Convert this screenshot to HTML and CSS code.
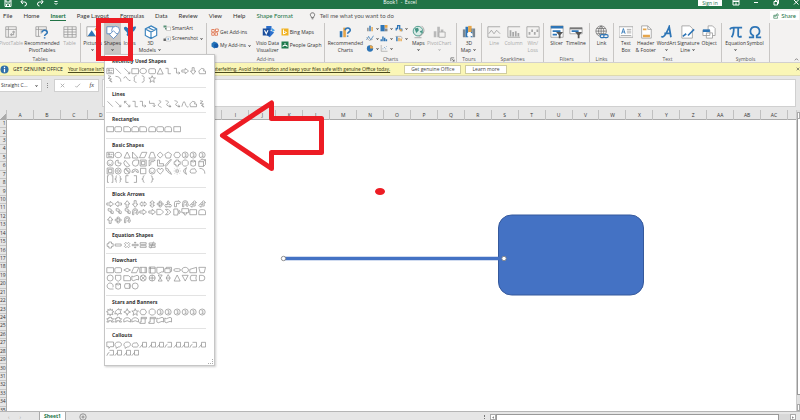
FILE: index.html
```html
<!DOCTYPE html>
<html lang="en">
<head>
<meta charset="utf-8">
<title>Book1 - Excel</title>
<link rel="stylesheet" href="styles.css">
</head>
<body>
<div class="app">
  <header class="titlebar">
    <div class="quick">
      <button aria-label="Save"><svg viewBox="0 0 8 8"><path d="M1 0v6.500h6V0M2.500 6.500v-2.500h3v2.500M2 0v2h4V0"/></svg></button>
      <button aria-label="Undo"><svg viewBox="0 0 8 8"><path d="M2.500 0L.8 2L3 4M1 2h3.500a2 2 0 0 1 0 4"/></svg></button>
      <button aria-label="Redo"><svg viewBox="0 0 8 8"><path d="M5.500 0L7.200 2L5 4M7 2H3.500a2 2 0 0 0 0 4"/></svg></button>
      <button aria-label="Customize"><svg viewBox="0 0 8 8"><path d="M2.500 1.500h3M2.500 3l1.500 1.500L5.500 3"/></svg></button>
    </div>
    <h1>Book1 &nbsp;-&nbsp; Excel</h1>
    <div class="window-tools">
      <button class="signin">Sign in</button>
      <button aria-label="Ribbon options"><svg viewBox="0 0 8 8"><path d="M1 0h6v5H1zM1 1.500h6M4 2.500V5"/></svg></button>
      <button aria-label="Minimize"><svg viewBox="0 0 8 8"><path d="M2 2.500h4"/></svg></button>
      <button aria-label="Restore"><svg viewBox="0 0 8 8"><path d="M2 1.500h3.500V5H2zM3.500 1.500V0h3v3.500h-1"/></svg></button>
      <button aria-label="Close"><svg viewBox="0 0 8 8"><path d="M2 0l4.500 4.500M6.500 0L2 4.500"/></svg></button>
    </div>
  </header>

  <nav class="tabs">
    <a href="#">File</a><a href="#">Home</a><a href="#" class="active">Insert</a><a href="#">Page Layout</a><a href="#">Formulas</a><a href="#">Data</a><a href="#">Review</a><a href="#">View</a><a href="#">Help</a><a href="#" class="context">Shape Format</a>
    <button class="tell"><svg viewBox="0 0 8 10"><path d="M2.600 7V6C.5 4.200 1 1 4 1s3.500 3.200 1.400 5v1zM3 8.500h2"/></svg>Tell me what you want to do</button>
    <button class="share"><svg viewBox="0 0 8 8"><path d="M3 3H1v4h5V5.500M2.500 5c0-2 1-3 3-3V.8L7.500 2.700L5.500 4.500V3.300C4 3.300 3 4 2.500 5z"/></svg>Share</button>
  </nav>

  <div class="ribbon">
    <section class="group">
      <div class="tools g-tables">
        <button class="tool off"><svg viewBox="0 0 16 16"><path class="k" d="M2 2h12v12H2zM2 5h12M5 2v12"/><path class="k2" d="M8 11h3V7M9.500 8.500L11 7l1.500 1.500M9 9.500L7.500 11L9 12.500"/></svg>PivotTable</button>
        <button class="tool"><svg viewBox="0 0 16 16"><path class="k" d="M1 2h12v4M1 2v11h5M1 5h12M4 2v11M7 5v5"/><path class="b2" d="M8 8.500c0-3.500 6-3 6 0c0 2-3 1.800-3 4M11 14v1.500"/></svg>Recommended<br>PivotTables</button>
        <button class="tool off"><svg viewBox="0 0 16 16"><path class="k" d="M1 2h14v12H1zM1 5h14M1 8h14M1 11h14M5.500 2v12M10.500 2v12"/></svg>Table</button>
      </div>
      <h2>Tables</h2>
    </section>
    <section class="group">
      <div class="tools g-illus">
        <button class="tool"><svg viewBox="0 0 16 16"><path class="k" fill="#fff" d="M1 2h14v11H1z"/><path class="b" d="M2 12.500L6.500 6l4.500 6.500z"/><circle class="o" cx="11.500" cy="5" r="1.500"/></svg>Pictures<i></i></button>
        <div class="shapes-menu">
          <button class="tool pressed" aria-expanded="true"><svg viewBox="0 0 16 16"><g fill="#fff" stroke="#4a7ebb" stroke-width=".9"><path d="M1 2h8v8H1z"/><circle cx="11" cy="6" r="4.500"/><path d="M8.500 6.500L13 11l-4.500 4.500L4 11z"/></g></svg>Shapes<i></i></button>
          <div class="gallery" id="gallery"></div>
        </div>
        <button class="tool"><svg viewBox="0 0 16 16"><path class="b" d="M1 3c3-3 4 2 7 1s4-3 7-2c-1 5-4 5-5 8s-4 4-6 1c3-3-3-4-3-8z"/></svg>Icons<i></i></button>
        <button class="tool"><svg viewBox="0 0 16 16"><path fill="#fff" stroke="#3b83bd" stroke-width="1.300" d="M8 1l6.500 3.500v7.500L8 15.500L1.500 12V4.500zM1.500 4.500L8 8l6.500-3.500M8 8v7.500M5 2.800l6.500 3.400"/></svg><span>3D<br>Models <i></i></span></button>
        <div class="stack">
          <button><svg viewBox="0 0 16 16"><path fill="#5b9279" d="M1 3h6v4H1zM4 8h5v3H4z"/><path class="k" fill="#fff" d="M7 6h8v7H7z"/></svg>SmartArt</button>
          <button><svg viewBox="0 0 16 16"><path fill="#666" d="M1 9h5v5H1z"/><path class="k" fill="#fff" d="M6 6h9v8H6z"/><path class="bl" d="M10.500 8v4M8.500 10h4"/></svg>Screenshot <i></i></button>
        </div>
      </div>
    </section>
    <section class="group">
      <div class="tools g-addins">
        <div class="stack">
          <button><svg viewBox="0 0 16 16"><path fill="#fff" stroke="#dc6b43" stroke-width="1.600" d="M1.500 3h5v5h-5zM1.500 9.500h5v5h-5zM8 9.500h5v5H8zM9 2h5.500v5H9z"/></svg>Get Add-ins</button>
          <button><svg viewBox="0 0 16 16"><path fill="#2474b9" d="M6 1l7 3v6l-6 5l-6-4V5z"/><circle cx="10.500" cy="9.500" r="4.500" fill="#1258a8"/></svg>My Add-ins <i></i></button>
        </div>
        <button class="tool"><svg viewBox="0 0 16 16"><path fill="#2b6fcb" d="M6 1h6v5H6zM10 6l5 2.500l-5 5.500l-4-3z"/><path fill="#1b4f9c" d="M2 4h8v8H2z"/><path fill="#48a1e8" d="M12 3l4 3l-3 2z"/><path stroke="#fff" fill="none" stroke-width="1.300" d="M4 6l2 4l2-4"/></svg>Visio Data<br>Visualizer</button>
        <div class="stack">
          <button><svg viewBox="0 0 16 16"><path fill="#f0b323" d="M1 1h14v14H1z"/><path fill="none" stroke="#fff" stroke-width="2" d="M5 3v9l6-3l-4-2"/></svg>Bing Maps</button>
          <button><svg viewBox="0 0 16 16"><path fill="#1f7a4d" d="M1 1h14v14H1z"/><path stroke="#fff" stroke-width="1.800" fill="none" d="M8 4v4M4 12V9h8v3"/></svg>People Graph</button>
        </div>
      </div>
      <h2>Add-ins</h2>
    </section>
    <section class="group">
      <div class="tools g-charts">
        <button class="tool"><svg viewBox="0 0 16 16"><path class="b" d="M2 7h3v7H2z"/><path class="o" d="M6 3h3v11H6z"/><path class="b2" d="M8 6c1-4 6-3 6 0c0 2-3 2-3 4M11 12v1.500"/></svg>Recommended<br>Charts</button>
        <div class="chart-grid">
          <button aria-label="Column chart"><svg viewBox="0 0 10 10"><path class="g" d="M1 4h2v5H1z"/><path class="b" d="M4 1h2v8H4z"/><path class="o" d="M7 3h2v6H7z"/></svg><i></i></button>
          <button aria-label="Hierarchy chart"><svg viewBox="0 0 10 10"><path class="b" d="M0 0h6v9H0z"/><path class="o" d="M6 0h4v4H6z"/><path class="g" d="M6 5h4v4H6z"/></svg><i></i></button>
          <button aria-label="Waterfall chart"><svg viewBox="0 0 10 10"><path class="b2" stroke-width="1" d="M1 8V5h2V1h3v5h3v3"/><path class="o" d="M6 6h3v3H6z"/></svg><i></i></button>
          <button aria-label="Line chart"><svg viewBox="0 0 10 10"><path class="bl" d="M0 7l3-5l3 5l4-6"/><path class="k" d="M0 3l4 5l5-2"/></svg><i></i></button>
          <button aria-label="Statistic chart"><svg viewBox="0 0 10 10"><path class="b" d="M0 6h2v3H0zM2.500 2h2v7h-2zM5 4h2v5H5zM7.500 6h2v3h-2z"/></svg><i></i></button>
          <button aria-label="Combo chart"><svg viewBox="0 0 10 10"><path class="o" d="M4 4h2v5H4zM7 5h2v4H7z"/><path class="b" d="M1 2h2v7H1z"/><path class="k" d="M0 2h8l2 3"/></svg><i></i></button>
          <button aria-label="Pie chart"><svg viewBox="0 0 10 10"><circle class="b" cx="5" cy="5" r="4.500"/><path class="o" d="M5 5V.5A4.500 4.500 0 0 1 9.500 5z"/></svg><i></i></button>
          <button aria-label="Scatter chart"><svg viewBox="0 0 10 10"><path class="k" d="M1 0v9h9"/><path class="b" d="M3 5h1v1H3zM5 3h1v1H5zM7 5h1v1H7zM8 2h1v1H8z"/></svg><i></i></button>
        </div>
        <button class="tool"><svg viewBox="0 0 16 16"><circle cx="8" cy="7" r="5.500" fill="#d9ebe6" stroke="#459585"/><path fill="#459585" d="M4 4l4-1l1 3l-3 3zM10 7l3-1l-1 4z"/><path class="k" d="M4 14.500h8M12 1c5 4 3 10-3 12"/></svg>Maps<i></i></button>
        <button class="tool off"><svg viewBox="0 0 16 16"><path fill="#b9b9b9" d="M2 7h3v7H2zM6 2h3v12H6zM10 5h3v9h-3z"/><path fill="#f3f2f1" stroke="#aaa" d="M8 8h7v6H8z"/></svg>PivotChart<i></i></button>
      </div>
      <h2>Charts</h2><button class="launcher" aria-label="Chart options"><svg viewBox="0 0 6 6"><path d="M1 5V1h4M2.500 2.500L5 5M5 3v2H3"/></svg></button>
    </section>
    <section class="group">
      <div class="tools">
        <button class="tool"><svg viewBox="0 0 16 16"><path fill="#7b8791" d="M1 5h3v9H1z"/><path class="b" d="M4 2h3v12H4zM10 4h2v10h-2z"/><path class="o" d="M7 1h4v7H7z"/><path fill="#7b8791" d="M12 4h3v10h-3z"/><path fill="#fff" d="M6 9l3-1l3 2v3l-3-1l-3 1z"/></svg><span>3D<br>Map <i></i></span></button>
      </div>
      <h2>Tours</h2>
    </section>
    <section class="group">
      <div class="tools g-spark">
        <button class="tool off"><svg viewBox="0 0 16 16"><path class="k" d="M1 2h14M1 14h14M1 2v12M2 10l3-4l3 4l3-4l4 4"/></svg>Line</button>
        <button class="tool off"><svg viewBox="0 0 16 16"><path class="k" d="M1 2h14M1 14h14M1 2v12"/><path fill="#a8a8a8" d="M3 6h2v7H3zM6 8h2v5H6zM9 7h2v6H9zM12 9h2v4h-2z"/></svg>Column</button>
        <button class="tool off"><svg viewBox="0 0 16 16"><path class="k" d="M1 2h14v12H1z"/><path fill="#a8a8a8" d="M3 8h2v3H3zM6 5h2v3H6zM9 8h2v3H9zM12 5h2v3h-2z"/></svg>Win/<br>Loss</button>
      </div>
      <h2>Sparklines</h2>
    </section>
    <section class="group">
      <div class="tools g-filters">
        <button class="tool"><svg viewBox="0 0 16 16"><path class="k" fill="#fff" d="M1 1h14v13H1z"/><path class="b" d="M1 1h14v3H1zM3 6h9v2H3zM3 10h5v2H3z"/><path fill="#555" d="M7 8h8l-3 3.500V15h-2v-3.500z"/></svg>Slicer</button>
        <button class="tool"><svg viewBox="0 0 16 16"><path class="k" fill="#fff" d="M1 3h14v7H1z"/><path fill="#777" d="M1 3h14v2H1z"/><path class="b" d="M3 6h8v2H3z"/><path fill="#555" d="M7 8h8l-3 3.500V15h-2v-3.500z"/></svg>Timeline</button>
      </div>
      <h2>Filters</h2>
    </section>
    <section class="group">
      <div class="tools">
        <button class="tool"><svg viewBox="0 0 16 16"><g fill="none" stroke="#666" stroke-width=".8"><circle cx="7" cy="7" r="6"/><path d="M1 7h12M7 1v12M2 4h10M2 10h10M7 1c-4 4-4 8 0 12M7 1c4 4 4 8 0 12"/></g><g fill="#f3f2f1" stroke="#2e75b6" stroke-width="1.300"><rect x="6" y="11" width="5" height="3.500" rx="1.700"/><rect x="10" y="11" width="5" height="3.500" rx="1.700"/></g></svg>Link</button>
      </div>
      <h2>Links</h2>
    </section>
    <section class="group">
      <div class="tools g-text">
        <button class="tool"><svg viewBox="0 0 16 16"><path class="k" fill="#fff" d="M0 2h16v12H0z"/><path class="bl" d="M3 10l2-6l2 6M3.500 8h3"/><path class="k" d="M9 5h5M9 7h5M9 9h5M2 12h12"/></svg>Text<br>Box</button>
        <button class="tool"><svg viewBox="0 0 16 16"><path class="k" fill="#fff" d="M3 1h7l4 4v10H3z"/><path class="k" d="M10 1v4h4"/><path class="o" d="M4.500 4h4v2h-4zM4.500 11h8v3h-8z"/></svg>Header<br>&amp; Footer</button>
        <button class="tool"><svg viewBox="0 0 16 16"><path fill="none" stroke="#2e75b6" stroke-width="2" d="M1.500 13c2 2 5-1 9-11l2 12M5 9.500h7"/></svg>WordArt<i></i></button>
        <button class="tool"><svg viewBox="0 0 16 16"><path class="k" fill="#fff" d="M1 1h9l3 3v11H1z"/><path class="b2" d="M15 5l-7 7M2 13l4-3"/></svg><span>Signature<br>Line <i></i></span></button>
        <button class="tool"><svg viewBox="0 0 16 16"><path class="k" fill="#fff" d="M7 1h5l3 3v8H7z"/><path class="k" fill="#fff" d="M1 6h8v6H1zM5 9h7v6H5z"/><path class="b" d="M1 5h8v3H1z"/></svg>Object</button>
      </div>
      <h2>Text</h2>
    </section>
    <section class="group">
      <div class="tools g-symbols">
        <button class="tool"><svg viewBox="0 0 16 16"><path fill="none" stroke="#2e75b6" stroke-width="2" d="M1 5c1-2 2-2 4-2h10M5.500 3c0 5-.5 8-2.500 11M10.500 3v9c0 2 2 2 4 1"/></svg>Equation<i></i></button>
        <button class="tool"><svg viewBox="0 0 16 16"><path fill="none" stroke="#2e75b6" stroke-width="2" d="M1 14h5v-2C1 10 2 2 8 2s7 8 2 10v2h5"/></svg>Symbol</button>
      </div>
      <h2>Symbols</h2>
    </section>
    <div class="group last"><button class="launcher" aria-label="Collapse ribbon"><svg viewBox="0 0 6 6"><path d="M1 4l2-2l2 2"/></svg></button></div>
  </div>

  <div class="notice">
    <svg class="info" viewBox="0 0 10 10"><circle cx="5" cy="5" r="4.500" fill="#2f6fa8"/><path stroke="#fff" stroke-width="1.400" d="M5 4.200V8M5 2v1.300"/></svg>
    <strong>GET GENUINE OFFICE</strong>
    <a href="#">Your license isn't genuine, and you may be a victim of software counterfeiting. Avoid interruption and keep your files safe with genuine Office today.</a>
    <button>Get genuine Office</button>
    <button>Learn more</button>
    <button class="dismiss" aria-label="Dismiss"><svg viewBox="0 0 6 6"><path d="M1 1l4 4M5 1L1 5"/></svg></button>
  </div>

  <div class="formula-row">
    <button class="namebox">Straight C... <i></i></button>
    <span class="grip"></span>
    <div class="fx-tools">
      <button aria-label="Cancel"><svg viewBox="0 0 8 8"><path d="M2 2l4 4M6 2L2 6"/></svg></button>
      <button aria-label="Enter"><svg viewBox="0 0 8 8"><path d="M1.500 4.500L3 6l4-4"/></svg></button>
      <button class="fx">fx</button>
    </div>
    <textarea class="formula" aria-label="Formula bar"></textarea>
  </div>

  <main class="sheet">
    <div class="columns" id="columns"><span class="corner"></span></div>
    <div class="rows" id="rows"></div>
    <div class="canvas"></div>
    <div class="vscroll"><button aria-label="Scroll up"></button><span class="thumb"></span><button aria-label="Scroll down"></button></div>
  </main>

  <footer class="bottom">
    <div class="sheet-nav"><button aria-label="Previous sheet">‹</button><button aria-label="Next sheet">›</button></div>
    <button class="sheet-tab">Sheet1</button>
    <button class="add" aria-label="New sheet"><svg viewBox="0 0 10 10"><circle cx="5" cy="5" r="4"/><path d="M5 3v4M3 5h4"/></svg></button>
    <div class="hscroll"><span class="dots"></span><button aria-label="Scroll left"><svg viewBox="0 0 6 6"><path d="M4 1L2 3l2 2z"/></svg></button><span class="thumb"></span><span class="track"></span><button aria-label="Scroll right"><svg viewBox="0 0 6 6"><path d="M2 1l2 2l-2 2z"/></svg></button></div>
  </footer>

  <svg class="drawing" viewBox="0 0 800 420">
    <rect x="498.500" y="215" width="145" height="80" rx="13" fill="#4472c4" stroke="#35599c"/>
    <path d="M284 258.500H504" stroke="#4472c4" stroke-width="3.500"/>
    <g fill="#fff" stroke="#777" stroke-width=".8"><circle cx="283.500" cy="258.500" r="2.200"/><circle cx="504" cy="258.500" r="2.200"/></g>
    <g fill="none" stroke="#ed1c24" stroke-width="5">
      <path stroke-linejoin="round" d="M271.500 103v15.500h50V152.500h-50V168.500L222.500 135.500z"/>
      <path d="M98.500 20.500h32v38h-32z"/>
    </g>
    <ellipse cx="380" cy="191.500" rx="5" ry="3.500" fill="#ed1c24"/>
  </svg>
</div>
<script src="app.js"></script>
</body>
</html>
```
FILE: styles.css
```css
* { box-sizing: border-box; }
body { margin: 0; font: 5px/7px "Open Sans", "Noto Sans", sans-serif; color: #333; background: #fff; }
button { font: inherit; color: inherit; background: none; border: 0; padding: 0; margin: 0; white-space: nowrap; }
a { color: inherit; text-decoration: none; }
h1, h2 { margin: 0; font: inherit; }
svg { fill: none; flex: none; }
.app { position: relative; height: 100vh; display: flex; flex-direction: column; overflow: hidden; }

.titlebar { height: 9px; flex: none; background: #217346; color: #fff; display: grid; grid-template-columns: 1fr auto 1fr; align-items: start; }
.titlebar h1 { line-height: 5px; }
.titlebar svg { width: 8px; height: 8px; stroke: #fff; stroke-width: 1; display: block; }
.quick { display: flex; gap: 8px; padding-left: 4px; }
.window-tools { display: flex; justify-content: flex-end; align-items: start; gap: 12px; }
.signin { background: #fff; color: #217346; height: 6px; line-height: 5px; width: 24px; margin-right: -2px; }

.tabs { height: 13px; flex: none; display: flex; align-items: center; gap: 11px; padding: 0 1px 0 3px; background: #f3f2f1; font-family: Lato, "Open Sans", sans-serif; font-size: 6px; white-space: nowrap; }
.tabs a { height: 11px; line-height: 11px; border-bottom: 1px solid transparent; }
.tabs .active { color: #217346; font-weight: bold; border-color: #217346; }
.tabs .context { color: #217346; }
.tell { display: flex; align-items: center; gap: 4px; margin-left: 5px; color: #555; }
.tell svg { width: 7px; height: 8px; stroke: #555; }
.share { margin-left: auto; background: #fff; color: #217346; height: 9px; padding: 0 3px; display: flex; align-items: center; gap: 2px; }
.share svg { width: 6px; height: 6px; stroke: #217346; stroke-width: .8; }

.ribbon { height: 41px; flex: none; display: grid; grid-template-columns: 81fr 126fr 118fr 132fr 25fr 62fr 46fr 24fr 108fr 48fr 30fr; background: #f3f2f1; border-bottom: 1px solid #d2d0ce; }
.group { position: relative; min-width: 0; margin-top: 1px; border-right: 1px solid #c8c6c4; display: flex; flex-direction: column; justify-content: space-between; }
.group.last { border: 0; }
.group h2 { text-align: center; line-height: 6px; color: #555; }
.tools { display: grid; justify-content: stretch; }
.g-tables { grid-template-columns: 22fr 40fr 15fr 3fr; }
.g-illus { grid-template-columns: 23fr 17fr 17fr 25fr 43fr; }
.g-addins { grid-template-columns: 4fr 43fr 26fr 43fr; }
.g-addins > :first-child { grid-column: 2; }
.g-charts { grid-template-columns: 2fr 37fr 46fr 18fr 24fr 5fr; }
.g-charts > :first-child { grid-column: 2; }
.g-spark { grid-template-columns: 2fr 20fr 18fr 20fr; }
.g-spark > :first-child { grid-column: 2; }
.g-filters { grid-template-columns: 3fr 19fr 20fr 3fr; }
.g-filters > :first-child { grid-column: 2; }
.g-text { grid-template-columns: 2fr 20fr 20fr 22fr 22fr 20fr 2fr; }
.g-text > :first-child { grid-column: 2; }
.g-symbols { grid-template-columns: 4fr 20fr 20fr 4fr; }
.g-symbols > :first-child { grid-column: 2; }
.tool { min-width: 0; height: 31px; display: flex; flex-direction: column; align-items: center; text-align: center; line-height: 7px; }
.tool svg { display: block; width: 14px; height: 14px; margin: 2px 0 1px; }
.off { color: #aaa; }
.pressed { width: 100%; background: #c8c6c4; }
i { display: inline-block; flex: none; width: 3px; height: 3px; margin: 1px; border: solid currentColor; border-width: 0 1px 1px 0; transform: rotate(45deg) scale(.6); }
.k { stroke: #999; stroke-width: .9; }
.k2 { stroke: #aaa; stroke-width: 1.2; }
.b { fill: #2e75b6; }
.bl { stroke: #2e75b6; stroke-width: 1; }
.b2 { stroke: #2e75b6; stroke-width: 1.8; }
.o { fill: #e5a54b; }
.g { fill: #888; }
.stack { display: flex; flex-direction: column; align-items: start; gap: 2px; padding-top: 1px; }
.g-addins .stack { gap: 5px; padding-top: 5px; }
.stack button { display: flex; align-items: center; gap: 1px; height: 8px; }
.stack svg { width: 8px; height: 8px; }
.chart-grid { display: grid; grid-template-columns: repeat(3, 1fr); grid-auto-rows: 10px; padding-left: 2px; }
.chart-grid button { display: flex; align-items: center; gap: 1px; }
.chart-grid svg { width: 8px; height: 7px; }
.launcher { position: absolute; right: 1px; bottom: 0; width: 5px; height: 5px; }
.launcher svg { display: block; width: 5px; height: 5px; stroke: #555; stroke-width: .8; }

.shapes-menu { position: relative; }
.gallery { position: absolute; z-index: 2; left: 0; top: 31px; width: 111px; height: 312px; padding: 0 8px 4px 1px; background: #fff; border: 1px solid #c6c6c6; box-shadow: 1px 1px 2px #0003; display: flex; flex-direction: column; }
.gallery::after { content: ""; position: absolute; right: 1px; bottom: 1px; width: 4px; height: 4px; border: dotted #aaa; border-width: 0 1px 1px 0; }
.gallery section { min-height: 0; display: grid; border-bottom: 1px solid #e3e3e3; }
.gallery section:last-child { border: 0; }
.gallery h3 { min-height: 0; margin: 0; padding: 3px 0 0 6px; font: bold 5px/7px "Open Sans", sans-serif; color: #333; }
.shape-grid { min-height: 0; display: grid; grid-template-columns: repeat(12, 1fr); grid-auto-rows: 1fr; }
.shape-grid button { display: flex; min-height: 0; }
.shape-grid svg { width: 100%; height: 100%; stroke: #888; stroke-width: 1; }

.notice { height: 13px; flex: none; display: flex; align-items: center; background: #faf6b6; border-bottom: 1px solid #dedab0; white-space: nowrap; color: #444; }
.info { width: 9px; height: 9px; margin-right: 4px; }
.notice strong { font-weight: 400; color: #222; margin-right: 5px; }
.notice a { text-decoration: underline; margin-right: 14px; color: #4b4a1c; font-family: Lato, sans-serif; }
.notice button { background: #fff; border: 1px solid #d0cda0; height: 9px; line-height: 7px; padding: 0 6px; margin-right: 4px; }
.notice .dismiss { margin-left: auto; margin-right: 0; padding: 0; border: 0; background: none; }
.dismiss svg { width: 4px; height: 4px; stroke: #555; display: block; }

.formula-row { height: 34px; flex: none; display: flex; align-items: start; padding: 3px 4px 3px 0; background: #e6e6e6; }
.namebox, .fx-tools { height: 13px; background: #fff; border: 1px solid #d0d0d0; }
.namebox { width: 42px; border-left: 0; display: flex; align-items: center; justify-content: space-between; padding: 0 2px 0 1px; }
.grip { width: 2px; height: 5px; margin: 4px 5px; border-left: 1px dotted #888; }
.fx-tools { width: 45px; display: flex; align-items: center; justify-content: space-around; margin-right: 3px; }
.fx-tools svg { width: 7px; height: 7px; display: block; stroke: #aaa; }
.fx { font: italic 6px/7px "Liberation Serif", serif; }
.formula { flex: 1; align-self: stretch; border: 1px solid #d0d0d0; background: #fff; resize: none; padding: 0; }

.sheet { flex: 1; min-height: 0; position: relative; display: grid; grid-template: 10px 1fr / 7px 1fr 4px; }
.columns { grid-column: 1 / 3; display: grid; grid-template-columns: 7px repeat(29, 1fr) 8px; background: #e6e6e6; border-bottom: 1px solid #aaa; text-align: center; line-height: 10px; }
.columns span { border-right: 1px solid #c0c0c0; }
.columns .corner { background: linear-gradient(135deg, #e6e6e6 60%, #aaa 60%); }
.rows { grid-row: 2; display: grid; grid-auto-rows: 1fr; background: #e6e6e6; border-right: 1px solid #aaa; overflow: hidden; margin-bottom: -4px; }
.rows span { display: flex; align-items: center; justify-content: flex-end; min-height: 0; border-bottom: 1px solid #c6c6c6; padding-right: 1px; line-height: 5px; }
.canvas { background: #fff; }
.vscroll { grid-column: 3; grid-row: 1 / 3; background: #e0e0e0; border-left: 1px solid #ccc; display: flex; flex-direction: column; padding-top: 2px; }
.vscroll button { height: 7px; background: #fff; border: 1px solid #aaa; }
.vscroll .thumb { flex: 1; margin-bottom: 9px; background: #fff; border-left: 1px solid #999; border-bottom: 1px solid #999; }

.bottom { position: relative; height: 9px; flex: none; display: flex; background: #e6e6e6; border-top: 1px solid #b5b5b5; overflow: hidden; }
.sheet-nav { width: 39px; display: flex; gap: 10px; padding-left: 8px; color: #999; line-height: 10px; }
.sheet-tab { width: 27px; background: #fff; color: #217346; font-weight: bold; line-height: 9px; border: solid #aaa; border-width: 0 1px; }
.add { width: 8px; height: 8px; margin: 1px 0 0 13px; }
.add svg { width: 8px; height: 8px; display: block; stroke: #777; stroke-width: .9; }
.hscroll { display: flex; width: 39%; margin: 2px 4px 0 auto; }
.hscroll button { width: 6px; background: #fff; border: 1px solid #aaa; }
.hscroll svg { width: 4px; height: 5px; display: block; fill: #555; }
.dots { width: 2px; height: 4px; margin: 1px 4px 0 0; border-left: 1px dotted #777; }
.hscroll .thumb { flex: 1; background: #fff; border: 1px solid #999; border-bottom: 0; }
.track { width: 11px; background: #d8d8d8; }

.drawing { position: absolute; z-index: 5; left: 0; top: 0; width: 800px; height: 420px; pointer-events: none; }
```
FILE: app.js
```js
// Outlines on a 12 x 12 grid, one per gallery shape.
const P = {
  text: "M1 2h10v8H1zM3 4h2v2H3zM6.500 5h3M3 8h6",
  line: "M2 2l8 8", arrow: "M2 2l8 8M10 7v3H7", darrow: "M2 2l8 8M10 7v3H7M2 5V2h3",
  rect: "M1 2.500h10v7.500H1z", square: "M2 2h8v8H2z",
  oval: "M6 2C12.500 2 12.500 10 6 10S-.5 2 6 2z", circle: "M6 1.500a4.500 4.500 0 1 1 0 9a4.500 4.500 0 1 1 0-9z",
  rrect: "M3 2.500h6q2 0 2 2v3.500q0 2-2 2H3q-2 0-2-2V4.500q0-2 2-2z",
  tri: "M6 1.500L10.500 10.500h-9z", rtri: "M2 1.500v9h8.500z", para: "M4 2h7.500L8 10H.5z", trap: "M4 2h4l3 8.500H1z",
  dia: "M6 1.500L10.500 6L6 10.500L1.500 6z", flat: "M6 3.500L11 6L6 8.500L1 6z",
  pent: "M6 1.500L11 5L9 10.500H3L1 5z", hex: "M3.500 2h5L11 6l-2.500 4h-5L1 6z", oct: "M4 1.500h4L10.500 4v4L8 10.500H4L1.500 8V4z",
  elbow: "M2 2h4v8h4", elbowa: "M1 2h4v7h5M8 7l2 2l-2 2", elbowd: "M2 1v4h7v5M7 8l2 2l2-2",
  right: "M1 4.500h5V2l5 4l-5 4V7.500H1z", left: "M11 4.500H6V2L1 6l5 4V7.500h5z",
  up: "M4.500 11V6H2l4-5l4 5H7.500v5z", down: "M4.500 1v5H2l4 5l4-5H7.500V1z",
  lr: "M1 6l3-3.500v2h4v-2L11 6L8 9.500v-2H4v2z", ud: "M6 1l3.500 3h-2v4h2L6 11L2.500 8h2V4h-2z",
  quad: "M6 1l2 2H7v2h2V4l2 2l-2 2V7H7v2h1l-2 2l-2-2h1V7H3v1L1 6l2-2v1h2V3H4z",
  tee: "M6 1l2 3H7v3h2V6l2 2.500L9 11v-1H3v1L1 8.500L3 6v1h2V4H4z",
  bend: "M2 10V4q0-2 2-2h4V1l3 2.500L8 6V5H5v5z", uturn: "M2 10V5q0-4 4-4t4 4v2h1L9 10L6.500 7H8V5q0-2-2-2T4 5v5z",
  leftup: "M1 8l3-3v2h3V4H5l3-3l3 3H9v5H4v2z", curver: "M3 1Q9 1 9 5L7 4V6l3 3l1-4M3 1v3q4 0 5 5",
  curve: "M1 10Q4-2 6 5t5 5", scurve: "M4 1Q10 2 5 5t3 6", scurvea: "M2 1q7 1 3 4t5 5M8 7l2 3H7",
  free: "M2 10l-1-4l4-4l4 1l-1 3h3v4z", scrib: "M3 1l4 1l-4 3l5 1l-3 2l4 2M6 8l2 3",
  arc: "M2 2Q10 2 10 10", wave: "M1 5q2-5 5 0t5 3",
  lpar: "M8 1Q3 2 5 6Q3 10 8 11", rpar: "M4 1q5 1 3 5q2 4-3 5",
  lbr: "M8 1H4v10h4", rbr: "M4 1h4v10H4", lcur: "M8 1Q5 1 6 5L4 6l2 1q-1 4 2 4", rcur: "M4 1q3 0 2 4l2 1l-2 1q1 4-2 4",
  bracks: "M4 1H2v10h2M8 1h2v10H8", braces: "M4 1Q2 1 3 5L1 6l2 1q-1 4 1 4M8 1q2 0 1 4l2 1l-2 1q1 4-1 4",
  star5: "M6 1l1.500 3.500H11L8.200 7l1 4L6 8.700L2.800 11l1-4L1 4.500h3.500z", star4: "M6 1l1.500 3.500L11 6L7.500 7.500L6 11L4.500 7.500L1 6l3.500-1.500z",
  snip: "M1 2.500h7l3 2.500v5H1z", snip2: "M3 2.500h6l2 2v5.500H1V4.500z", round1: "M1 2.500h7q3 0 3 3V10H1z", round2: "M4 2.500h4q3 0 3 3V10H1V5.500q0-3 3-3z",
  pie: "M6 1.500A4.500 4.500 0 1 0 10.500 6H6z", chord: "M3 2a5 5 0 1 0 7 8z", tear: "M6 1.500h5V6A4.600 4.600 0 1 1 6 1.500z",
  frame: "M1.500 1.500h9v9h-9zM3.500 3.500h5v5h-5z", half: "M1.500 1.500h9l-2.500 2.500H4v4l-2.500 2.500z", ell: "M2 1.500h3V7h6v3.500H2z", stripe: "M1 10L9 1h2L3 11z",
  plus: "M4 1.500h4V4h2.500v4H8v2.500H4V8H1.500V4H4z", can: "M2.500 3q3.500-3 7 0v6.500q-3.500 2.500-7 0zM2.500 3q3.500 3 7 0", cube: "M1 4h7v7H1zM1 4l3-3h7v7l-3 3M8 4l3-3",
  donut: "M6 1.500a4.500 4.500 0 1 1 0 9a4.500 4.500 0 1 1 0-9zM6 4a2 2 0 1 1 0 4a2 2 0 1 1 0-4z", no: "M6 1.500a4.500 4.500 0 1 1 0 9a4.500 4.500 0 1 1 0-9zM3 3l6 6M4 2.500l5.500 5",
  block: "M1 8a5 5 0 0 1 10 0H8.500a2.500 2.500 0 0 0-5 0z", smile: "M6 1.500a4.500 4.500 0 1 1 0 9a4.500 4.500 0 1 1 0-9zM4 4.500v.5M8 4.500v.5M3.500 7q2.500 3 5 0",
  heart: "M6 10.500Q-1 5 2.500 2.500Q5 1 6 4Q7 1 9.500 2.500Q13 5 6 10.500z", bolt: "M2 1l4 2l1 3l2 1l2 4l-5-3l-1-2l-2-1z",
  sun: "M6 4a2 2 0 1 1 0 4a2 2 0 1 1 0-4zM6 1v1M6 10v1M1 6h1M10 6h1M2.500 2.500l1 1M8.500 8.500l1 1M9.500 2.500l-1 1M2.500 9.500l1-1",
  moon: "M8 1Q-1 6 8 11Q4 6 8 1z", cloud: "M3 9Q0 8 2 5q1-3 4-2q3-2 4 2q2 3-1 4z",
  num: "M6 1.500a4.500 4.500 0 1 1 0 9a4.500 4.500 0 1 1 0-9zM5 4h2v4M5 8h3",
  chev: "M2 2h4l4 4l-4 4H2l4-4z", tag: "M1 2h6l4 4l-4 4H1z", callr: "M1 1.500h6V5h2V3.500L11 6L9 8.500V7H7v3.500H1z", calld: "M1 1h10v6H7v1h1.500L6 11L3.500 8H5V7H1z",
  minus: "M1.500 4.500h9v3h-9z", times: "M2 4l2-2l2 2l2-2l2 2l-2 2l2 2l-2 2l-2-2l-2 2l-2-2l2-2z", div: "M1.500 5h9v2h-9zM5 2h2v1H5zM5 9h2v1H5z",
  eq: "M1.500 2.500h9V5h-9zM1.500 7h9v2.500h-9z", neq: "M1.500 3h9v2.500h-9zM1.500 7h9v2.500h-9zM4 11l4-10",
  proc: "M1 2h10v8H1zM3 2v8M9 2v8", store: "M1.500 1.500h9v9h-9zM3.500 1.500v9M1.500 3.500h9", doc: "M1 2h10v7q-3-1-5 1T1 10z", docs: "M1 4h8v6H1zM3 4V2h8v6H9",
  term: "M4 4h4q3 0 3 2t-3 2H4Q1 8 1 6t3-2z", input: "M1 5l10-3v8H1z", manual: "M1 2h10L9 10H3z", offp: "M2 2h8v6l-4 3l-4-3z",
  tape: "M1 3q2 2 5 0t5 0v6q-2-2-5 0t-5 0z", cross: "M6 1.500a4.500 4.500 0 1 1 0 9a4.500 4.500 0 1 1 0-9zM6 1.500v9M1.500 6h9", ex: "M6 1.500a4.500 4.500 0 1 1 0 9a4.500 4.500 0 1 1 0-9zM3 3l6 6M9 3l-6 6",
  glass: "M3 1.500h6l-6 9h6z", sort: "M6 1l3 5l-3 5l-3-5zM3 6h6", merge: "M1.500 2h9L6 10.500z", delay: "M2 2h4q4 0 4 4t-4 4H2z", disk: "M3 2h8q-2 4 0 8H3Q0 6 3 2z",
  seq: "M11 10.500H6A4.500 4.500 0 1 1 10 8", drum: "M3 2.500h7q2 3.500 0 7H3q-2-3.500 0-7zM10 2.500q-2 3.500 0 7",
  burst: "M6 1l1 2.500L9.500 2L9 4.500l2.500 1L9 7l1 3L7 9l-1 2.500L5 9l-3 1l1-3L.5 5.500L3 4.500L2.500 2L5 3.500z",
  burst2: "M4 3l3-2v2l4-1l-2 4l2 3l-4-1l-2 3l-1-3l-3 1l1-4z",
  ribbon: "M1 4h3V2h4v2h3L9.500 6.500L11 9H8V7H4v2H1l1.500-2.500z", banner: "M1 5q5-5 10 0v4Q6 5 1 9z", scroll: "M3 2h8v2H9v7H1V9h2zM3 4h6",
  cbox: "M1 1.500h10v7H6L4 11V8.500H1z", coval: "M6 1.500c7 0 6 7.500 0 7.500L3 11V8.500C-.5 7 1 1.500 6 1.500z", cline: "M5 2h6v7H5zM5 5L1 10", cline2: "M5 2h6v7H5M5 5l-2 1l-2 4"
};
const sections = [
  ["Recently Used Shapes", "text line arrow rect oval rrect tri elbow elbowa right down free scrib arc wave lpar rpar star5"],
  ["Lines", "line arrow darrow elbow elbowa elbowd scurve scurvea scurvea curve free scrib"],
  ["Rectangles", "rect rrect snip snip2 round1 round2 rrect round2 rect"],
  ["Basic Shapes", "text oval tri rtri para trap dia pent hex num num num smile pie chord tear frame half ell stripe plus oct can cube frame donut no block square smile heart bolt sun moon cloud arc bracks braces lbr rbr lcur rcur"],
  ["Block Arrows", "right left up down lr ud quad tee bend uturn leftup leftup curver curver curver uturn right right tag chev callr calld rect round2 up quad uturn"],
  ["Equation Shapes", "plus minus times div eq neq"],
  ["Flowchart", "rect rrect flat para proc store doc docs term oval input manual circle offp snip tape ex cross glass sort tri merge disk delay seq can drum circle"],
  ["Stars and Banners", "burst burst2 star4 star5 hex oct num num num num num num ribbon ribbon banner banner scroll scroll tape tape"],
  ["Callouts", "cbox coval coval cloud cline cline cline cline2 cline cline cline2 cline cline2 cline cline cline"]
];
const gallery = document.getElementById("gallery");
for (const [title, list] of sections) {
  const names = list.split(" ");
  const rows = Math.ceil(names.length / 12);
  const section = document.createElement("section");
  // Heading takes one and a half icon rows, the space under the icons half a row.
  section.style.flex = `${rows + 2} 1 0`;
  section.style.gridTemplateRows = `minmax(0, 3fr) minmax(0, ${rows * 2}fr) minmax(0, 1fr)`;
  section.innerHTML = `<h3>${title}</h3><div class="shape-grid">` +
    names.map(n => `<button aria-label="${n}"><svg viewBox="0 0 12 12"><path d="${P[n]}"/></svg></button>`).join("") + "</div>";
  gallery.append(section);
}
const label = n => n < 26 ? String.fromCharCode(65 + n) : "A" + String.fromCharCode(39 + n);
for (let i = 0; i < 29; i++) {
  document.getElementById("columns").insertAdjacentHTML("beforeend", `<span>${label(i)}</span>`);
}
for (let i = 1; i <= 35; i++) {
  document.getElementById("rows").insertAdjacentHTML("beforeend", `<span>${i}</span>`);
}
```
